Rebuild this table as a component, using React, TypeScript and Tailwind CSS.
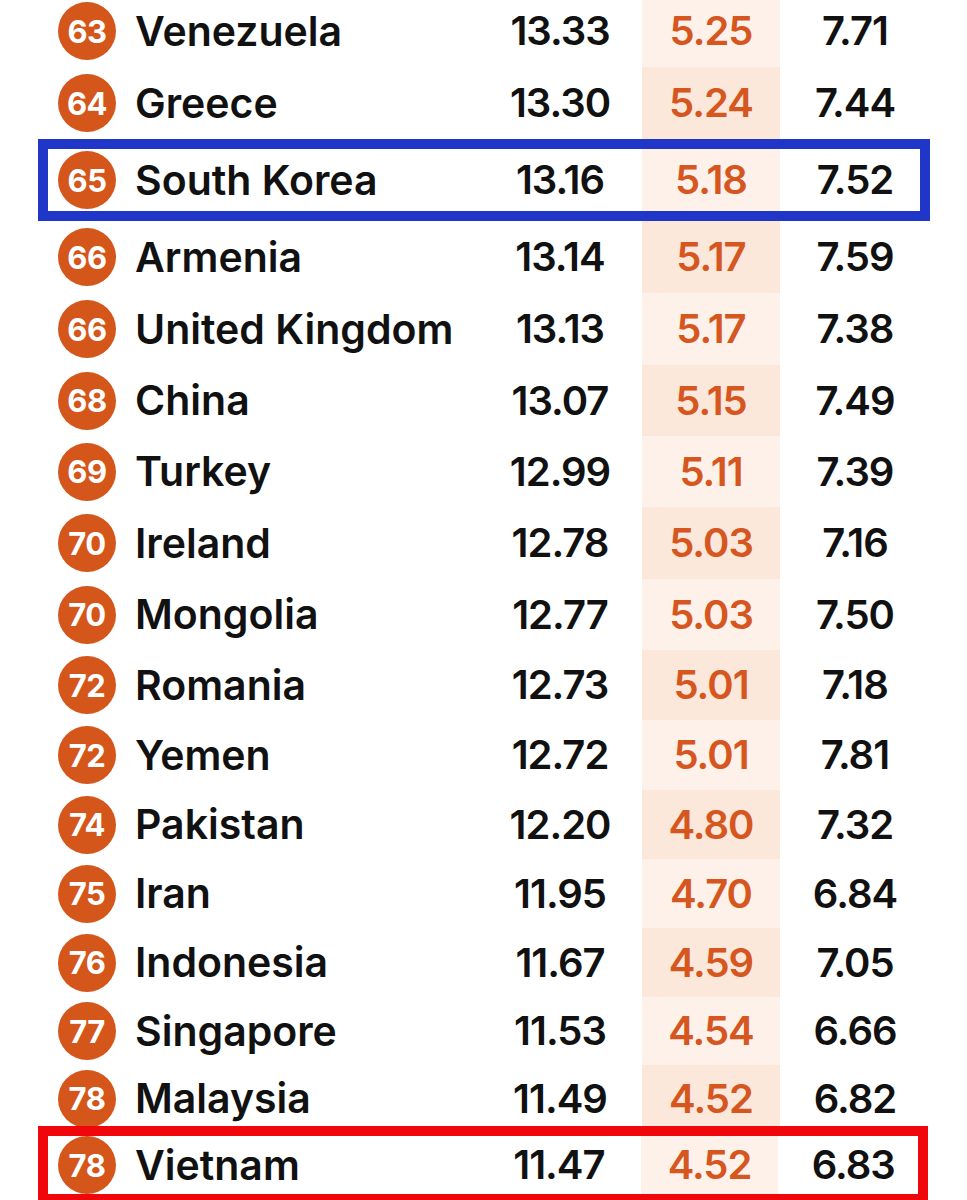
import React from "react";

type Row = {
  rank: string;
  name: string;
  a: string;
  b: string;
  c: string;
  h: string;
  box?: "blue" | "red";
  extra?: string;
};

const rows: Row[] = [
  { rank: "63", name: "Venezuela", a: "13.33", b: "5.25", c: "7.71", h: "h-[72px]" },
  { rank: "64", name: "Greece", a: "13.30", b: "5.24", c: "7.44", h: "h-[72px]" },
  { rank: "65", name: "South Korea", a: "13.16", b: "5.18", c: "7.52", h: "h-[82px]", box: "blue" },
  { rank: "66", name: "Armenia", a: "13.14", b: "5.17", c: "7.59", h: "h-[72px]" },
  { rank: "66", name: "United Kingdom", a: "13.13", b: "5.17", c: "7.38", h: "h-[72px]" },
  { rank: "68", name: "China", a: "13.07", b: "5.15", c: "7.49", h: "h-[71px]" },
  { rank: "69", name: "Turkey", a: "12.99", b: "5.11", c: "7.39", h: "h-[71px]" },
  { rank: "70", name: "Ireland", a: "12.78", b: "5.03", c: "7.16", h: "h-[72px]" },
  { rank: "70", name: "Mongolia", a: "12.77", b: "5.03", c: "7.50", h: "h-[71px]" },
  { rank: "72", name: "Romania", a: "12.73", b: "5.01", c: "7.18", h: "h-[70px]" },
  { rank: "72", name: "Yemen", a: "12.72", b: "5.01", c: "7.81", h: "h-[70px]" },
  { rank: "74", name: "Pakistan", a: "12.20", b: "4.80", c: "7.32", h: "h-[69px]" },
  { rank: "75", name: "Iran", a: "11.95", b: "4.70", c: "6.84", h: "h-[69px]" },
  { rank: "76", name: "Indonesia", a: "11.67", b: "4.59", c: "7.05", h: "h-[69px]" },
  { rank: "77", name: "Singapore", a: "11.53", b: "4.54", c: "6.66", h: "h-[68px]" },
  { rank: "78", name: "Malaysia", a: "11.49", b: "4.52", c: "6.82", h: "h-[61px]", extra: "pt-[6px]" },
  { rank: "78", name: "Vietnam", a: "11.47", b: "4.52", c: "6.83", h: "h-[78px]", box: "red" },
];

function Cells({ r, i }: { r: Row; i: number }) {
  const band = i % 2 === 0 ? "bg-[#fef1ea]" : "bg-[#fce7db]";
  const ex = r.extra ?? "";
  return (
    <>
      <div className={`flex items-center ${ex}`}>
        <div className="flex h-[58px] w-[58px] items-center justify-center rounded-full bg-[#d4561b] text-[31px] font-bold leading-none tracking-[-0.5px] text-white">
          {r.rank}
        </div>
      </div>
      <div className={`ml-[19px] flex w-[355px] items-center text-[41px] font-semibold leading-none text-[#111111] ${ex}`}>
        {r.name}
      </div>
      <div className={`flex w-[140px] items-center justify-center text-[40px] font-semibold leading-none tracking-[-1px] text-[#111111] ${ex}`}>
        {r.a}
      </div>
      <div className={`ml-[12px] flex w-[138px] items-center justify-center ${band} text-[40px] font-semibold leading-none tracking-[-1px] text-[#d5561f] ${ex}`}>
        {r.b}
      </div>
      <div className={`ml-[10px] flex w-[130px] items-center justify-center text-[40px] font-semibold leading-none tracking-[-1px] text-[#111111] ${ex}`}>
        {r.c}
      </div>
    </>
  );
}

export default function App() {
  return (
    <div
      className="h-[1200px] w-[967px] overflow-hidden bg-white"
      style={{ fontFamily: "Inter, 'Noto Sans', sans-serif" }}
    >
      <div className="-mt-[5px] flex flex-col">
        {rows.map((r, i) => {
          if (r.box) {
            const border = r.box === "blue" ? "border-[#1f36c8] w-[892px]" : "border-[#ef070c] w-[890px]";
            return (
              <div key={i} className={`ml-[38px] flex ${r.h} shrink-0 border-[10px] ${border} pl-[10px]`}>
                <Cells r={r} i={i} />
              </div>
            );
          }
          return (
            <div key={i} className={`flex ${r.h} shrink-0 pl-[58px]`}>
              <Cells r={r} i={i} />
            </div>
          );
        })}
      </div>
    </div>
  );
}
